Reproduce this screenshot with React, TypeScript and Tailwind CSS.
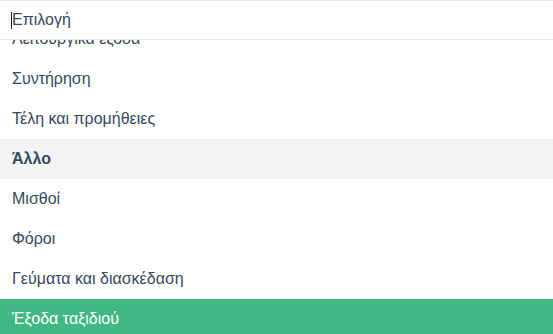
const options = [
  "Λειτουργικά έξοδα",
  "Συντήρηση",
  "Τέλη και προμήθειες",
  "Άλλο",
  "Μισθοί",
  "Φόροι",
  "Γεύματα και διασκέδαση",
  "Έξοδα ταξιδιού",
  "Ενοίκιο",
];

const SELECTED = "Άλλο";
const HIGHLIGHTED = "Έξοδα ταξιδιού";

export default function App() {
  return (
    <div className="w-[553px] h-[334px] overflow-hidden bg-white text-[#35495e] font-['Liberation_Sans',Arial,sans-serif]">
      <div className="h-[40px] border-t border-b border-[#e8e8e8] flex items-center pl-[11px]">
        <span className="w-px h-[17px] bg-[#222]" />
        <span className="text-[16px]">Επιλογή</span>
      </div>

      <div className="h-[294px] overflow-hidden">
        <ul className="-mt-[21px]">
          {options.map((opt) => (
            <li
              key={opt}
              className={
                "h-[40px] flex items-center px-3 text-[16px] " +
                (opt === HIGHLIGHTED
                  ? "bg-[#41b883] text-white"
                  : opt === SELECTED
                    ? "bg-[#f3f3f3] font-bold"
                    : "")
              }
            >
              {opt}
            </li>
          ))}
        </ul>
      </div>
    </div>
  );
}
